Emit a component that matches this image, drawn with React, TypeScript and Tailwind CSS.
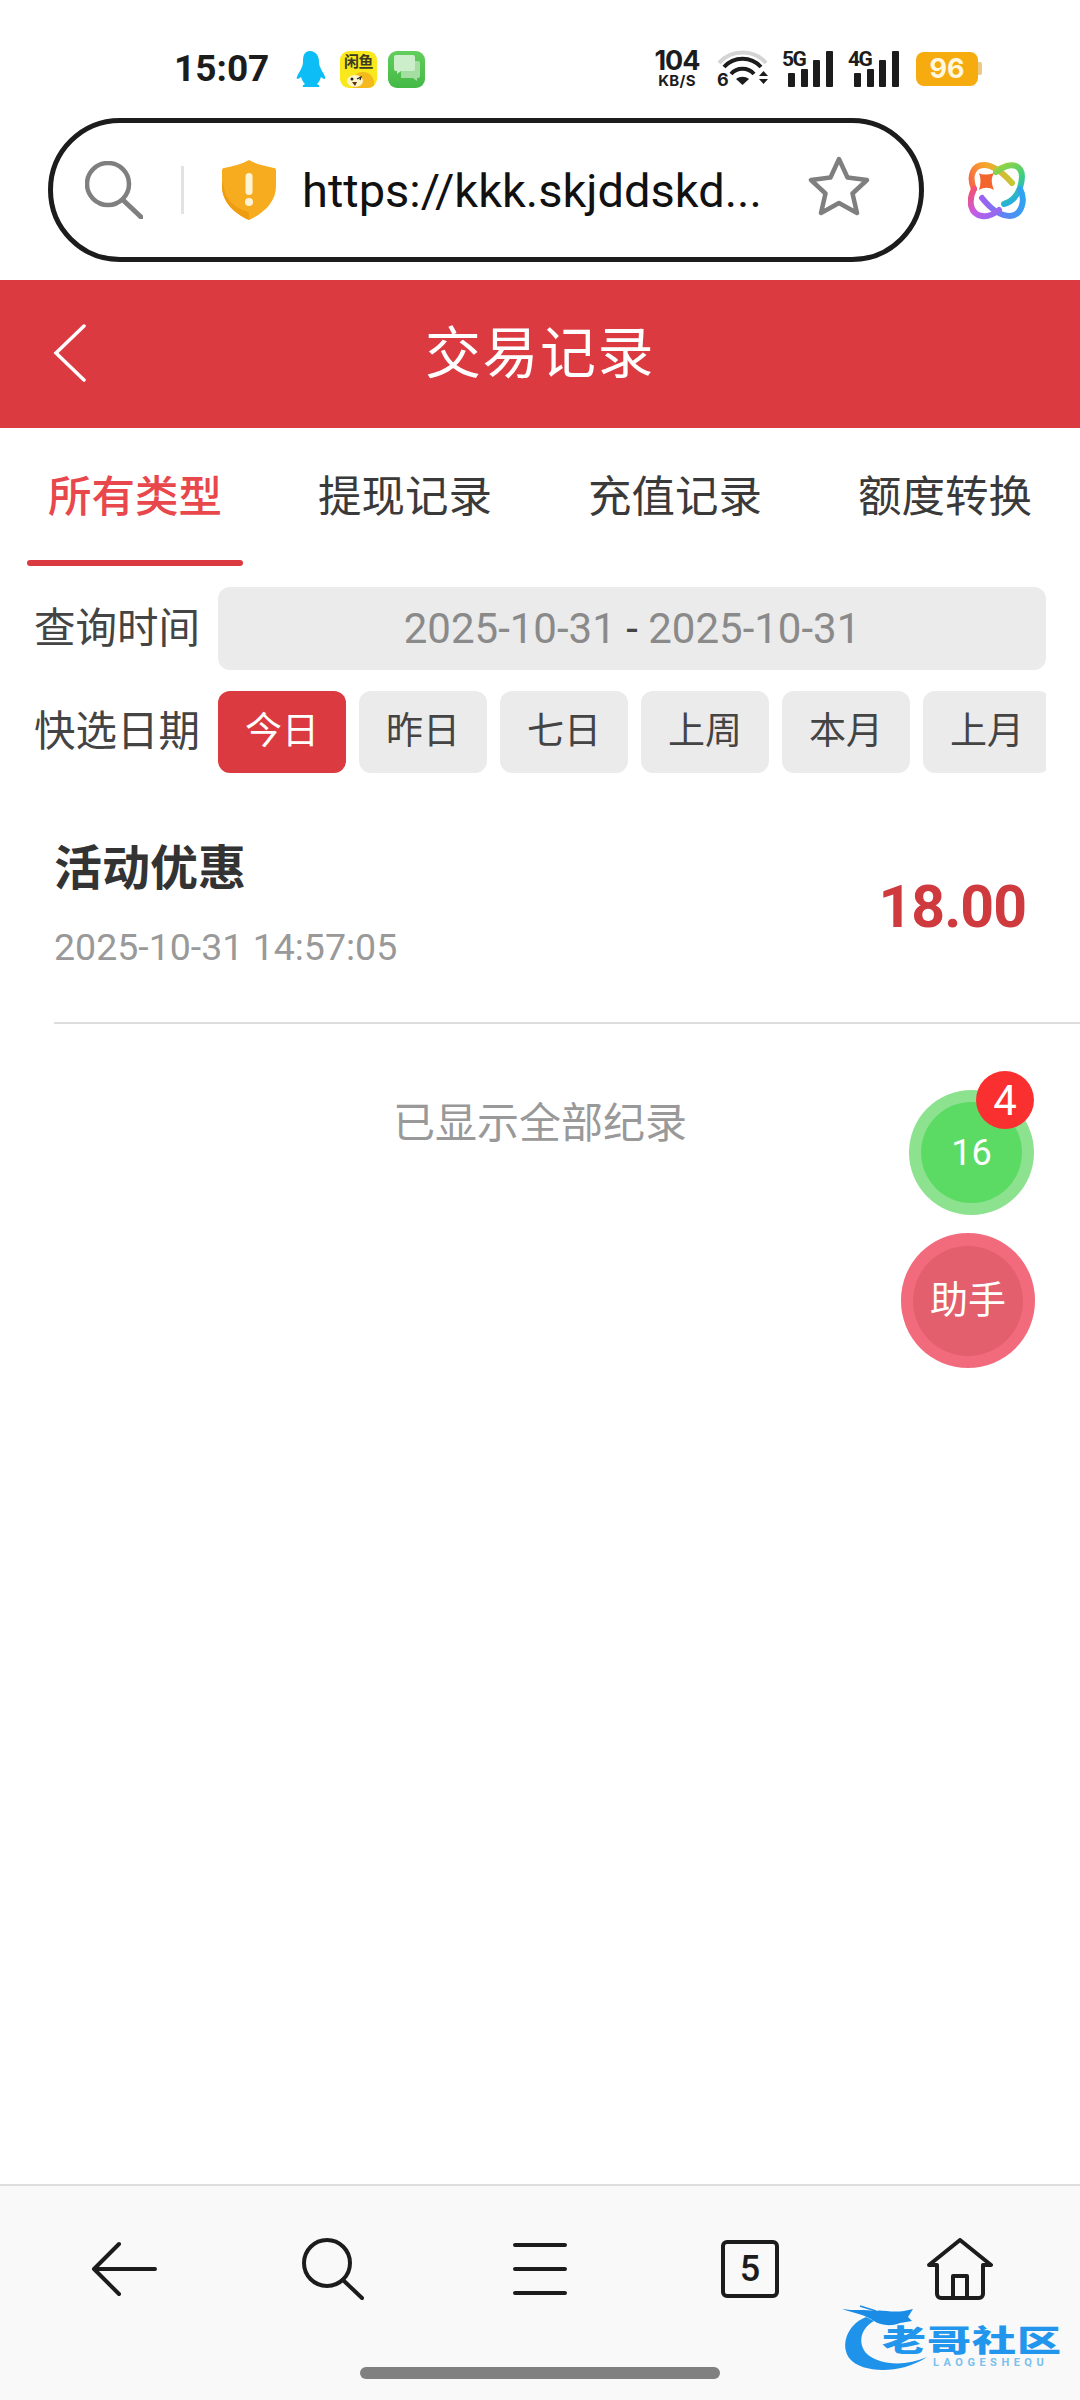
const TABS = ['所有类型', '提现记录', '充值记录', '额度转换'];
const QUICK = ['今日', '昨日', '七日', '上周', '本月', '上月'];
const CJK = "font-['Roboto','Noto_Sans_CJK_SC',sans-serif]";

function Signal({ label }: { label: string }) {
    return (
        <div className="relative w-[51px] h-[38px]">
            <span className="absolute left-0 -top-[3px] text-[21px] leading-[24px] font-bold text-[#1c1c1c] tracking-[-1.5px] font-['Roboto',sans-serif]">{label}</span>
            <svg className="absolute left-0 top-0" width="51" height="38" viewBox="0 0 51 38" fill="#1c1c1c">
                <rect x="6" y="23" width="7" height="14" rx="1" />
                <rect x="19" y="19" width="7" height="18" rx="1" />
                <rect x="31" y="10" width="7" height="27" rx="1" />
                <rect x="44" y="1" width="7" height="36" rx="1" />
            </svg>
        </div>
    );
}

function StatusBar() {
    return (
        <div className="h-[118px] pt-[50px] pl-[174px] pr-[98px] flex items-start">
            <div className="h-[38px] flex items-center">
                <span className="w-[93px] text-[37px] leading-[38px] font-bold text-[#1c1c1c] whitespace-nowrap">15:07</span>
                <svg className="ml-[27px]" width="32" height="36" viewBox="0 0 32 36">
                    <path d="M16 0c6 0 9 5 9 11 0 3 1 5 3 9 2 3 4 7 3 8-1 0-3-1-4-2-1 3-2 5-4 7 2 1 3 2 2 3H9c-1-1 0-2 2-3-2-2-3-4-4-7-1 1-3 2-4 2-1-1 1-5 3-8 2-4 3-6 3-9C9 5 10 0 16 0z" fill="#0dbdf6" />
                </svg>
                <div className="ml-[14px] relative w-[37px] h-[37px] rounded-[9px] bg-[#f9e81b] overflow-hidden flex justify-center">
                    <span className="text-[15px] leading-[16px] mt-[3px] font-bold text-[#3d3a22] tracking-[-0.5px] whitespace-nowrap">闲鱼</span>
                    <svg className="absolute left-0 bottom-0" width="37" height="18" viewBox="0 0 37 18">
                        <circle cx="23" cy="13" r="11" fill="#f4b91c" />
                        <ellipse cx="15" cy="11" rx="8" ry="6" fill="#fff6c8" />
                        <circle cx="12" cy="9" r="1.500" fill="#222" />
                        <path d="M17 9l4-2-1 3" fill="none" stroke="#222" strokeWidth="1.200" />
                        <path d="M12 12l5 0-2 4z" fill="#5b3312" />
                    </svg>
                </div>
                <div className="ml-[11px] w-[37px] h-[37px] rounded-[9px] bg-linear-to-b from-[#62ce5c] to-[#43b945] flex items-center justify-center">
                    <svg width="37" height="37" viewBox="0 0 37 37">
                        <path d="M13 10h17a2 2 0 0 1 2 2v13a2 2 0 0 1-2 2h-1v3l-4-3H13z" fill="#a4dea2" />
                        <path d="M8 4h17a2 2 0 0 1 2 2v12a2 2 0 0 1-2 2H13l-4 3v-3H8a2 2 0 0 1-2-2V6a2 2 0 0 1 2-2z" fill="#cdeecb" />
                    </svg>
                </div>
            </div>
            <div className="ml-auto h-[38px] flex items-center font-['Inter',sans-serif]">
                <div className="w-[46px] flex flex-col items-center text-[#1c1c1c] font-bold">
                    <span className="text-[27px] leading-[22px] tracking-[-1px]">104</span>
                    <span className="mt-[1px] text-[15px] leading-[15px] tracking-[0.3px]">KB/S</span>
                </div>
                <div className="ml-[17px] relative w-[52px] h-[38px]">
                    <svg className="absolute left-0 top-0" width="52" height="38" viewBox="0 0 52 38" fill="none">
                        <path d="M2 13C14 -1 37 -1 49 13" stroke="#d4d4d4" strokeWidth="4" />
                        <path d="M7 17C17 6 34 6 44 17" stroke="#1c1c1c" strokeWidth="4" />
                        <path d="M14 24C20 17 31 17 37 24" stroke="#1c1c1c" strokeWidth="4" />
                        <path d="M19 29c4-3 9-3 13 0l-6.500 6z" fill="#1c1c1c" />
                        <path d="M42 26h9l-4.500-5zM42 29h9l-4.500 5z" fill="#1c1c1c" />
                    </svg>
                    <span className="absolute left-0 top-[21px] text-[18px] leading-[18px] font-bold text-[#1c1c1c]">6</span>
                </div>
                <div className="ml-[13px]"><Signal label="5G" /></div>
                <div className="ml-[15px]"><Signal label="4G" /></div>
                <div className="ml-[17px] relative w-[62px] h-[34px] mr-[4px] rounded-[8px] bg-[#f6ab0e] flex items-center justify-center text-[#fff8e0] text-[27px] font-bold">
                    96
                    <span className="absolute -right-[4px] top-[10px] w-[4px] h-[13px] rounded-r-[2px] bg-[#ecca85]" />
                </div>
            </div>
        </div>
    );
}

function AppLogo() {
    return (
        <svg className="mt-[44px] ml-[44px]" width="58" height="58" viewBox="0 0 58 58" fill="none" strokeWidth="6" strokeLinecap="round">
            <defs>
                <linearGradient id="lg1" x1="0" y1="30" x2="45" y2="10" gradientUnits="userSpaceOnUse">
                    <stop offset="0" stopColor="#f6574f" />
                    <stop offset="0.5" stopColor="#f9a12a" />
                    <stop offset="1" stopColor="#b9cf3a" />
                </linearGradient>
                <linearGradient id="lg2" x1="28" y1="4" x2="50" y2="40" gradientUnits="userSpaceOnUse">
                    <stop offset="0" stopColor="#9fd33c" />
                    <stop offset="0.5" stopColor="#3fcf7e" />
                    <stop offset="1" stopColor="#22a9f0" />
                </linearGradient>
                <linearGradient id="lg3" x1="56" y1="30" x2="14" y2="42" gradientUnits="userSpaceOnUse">
                    <stop offset="0" stopColor="#2aa6f2" />
                    <stop offset="0.6" stopColor="#5f84f4" />
                    <stop offset="1" stopColor="#a45ef0" />
                </linearGradient>
                <linearGradient id="lg4" x1="5" y1="26" x2="30" y2="54" gradientUnits="userSpaceOnUse">
                    <stop offset="0" stopColor="#f5506f" />
                    <stop offset="0.5" stopColor="#c65be6" />
                    <stop offset="1" stopColor="#8b6cf2" />
                </linearGradient>
            </defs>
            <path d="M6 27C0 13 6 3 16 3c10 0 20 9 28 18" stroke="url(#lg1)" />
            <path d="M28 10C35 4 43 2 48 4c7 3 7 12 4 22-3 8-9 14-16 16" stroke="url(#lg2)" />
            <path d="M52 27c6 11 2 26-10 27-10 0-20-8-28-18" stroke="url(#lg3)" />
            <path d="M6 27C0 39 2 52 14 54c6 1 12-2 17-6" stroke="url(#lg4)" />
            <path d="M11 11c3 2 8 2 15 0-3 5-3 10 0 17-5-3-10-3-15 0 2-6 2-12 0-17z" fill="#f4642f" />
        </svg>
    );
}

function AddressBar() {
    return (
        <div className="h-[162px] flex items-start">
            <div className="ml-[48px] w-[876px] h-[144px] rounded-[72px] border-[5px] border-[#1c1c1c] flex items-center bg-white">
                <svg className="ml-[32px]" width="58" height="58" viewBox="0 0 58 58" fill="none" stroke="#7f7f7f" strokeWidth="4.500" strokeLinecap="round">
                    <circle cx="23" cy="23" r="21" />
                    <path d="M38 39l18 17" strokeWidth="5" />
                </svg>
                <div className="ml-[38px] w-[3px] h-[48px] bg-[#e2e2e2]" />
                <svg className="ml-[38px]" width="54" height="60" viewBox="0 0 54 60">
                    <path d="M27 0c7 4 15 6 25 8 2 0 2 2 2 4v14c0 16-12 27-27 34C12 53 0 42 0 26V12c0-2 0-4 2-4 10-2 18-4 25-8z" fill="#f6ac1e" />
                    <path d="M0 26c0-2 0-3 1-4 1 16 10 26 26 30v8C12 53 0 42 0 26z" fill="#ee9c10" />
                    <rect x="23.500" y="13" width="7" height="22" rx="3.500" fill="#fff3d6" />
                    <circle cx="27" cy="42" r="4" fill="#fff3d6" />
                </svg>
                <span className="ml-[26px] w-[473px] pt-[2px] text-[47px] text-[#111] font-['Roboto',sans-serif] truncate">https://kkk.skjddskd...</span>
                <svg className="ml-[33px] -mt-[8px]" width="62" height="60" viewBox="0 0 62 60" fill="none" stroke="#7f7f7f" strokeWidth="4.500" strokeLinejoin="round">
                    <path d="M31 3l8.500 18.500L59 24 44.500 37.500 49 57 31 47 13 57l4.500-19.500L3 24l19.500-2.500z" />
                </svg>
            </div>
            <AppLogo />
        </div>
    );
}

export default function App() {
    return (
        <div className={`w-[1080px] h-[2400px] bg-white flex flex-col overflow-hidden relative ${CJK}`}>
            <StatusBar />
            <AddressBar />
            <header className="h-[148px] bg-[#db3a40] relative flex items-center justify-center">
                <svg className="absolute left-[53px] top-[44px]" width="34" height="58" viewBox="0 0 34 58" fill="none" stroke="#fff" strokeWidth="3.500" strokeLinecap="round">
                    <path d="M31 2L3 29l28 27" />
                </svg>
                <h1 className="text-[56px] text-white font-normal tracking-[1.5px]">交易记录</h1>
            </header>
            <nav className="h-[138px] flex relative">
                {TABS.map((tab, i) => (
                    <div key={tab} className="w-[270px] flex justify-center pt-[40px] relative">
                        <span className={`text-[43.5px] leading-[60px] ${i === 0 ? 'text-[#e8474c] font-medium' : 'text-[#3a3a3a]'}`}>{tab}</span>
                        {i === 0 && <span className="absolute left-[27px] bottom-0 w-[216px] h-[6px] rounded-full bg-[#db3a40]" />}
                    </div>
                ))}
            </nav>
            <div className="mt-[21px] flex items-center px-[34px]">
                <span className="w-[184px] text-[41.5px] text-[#444] leading-[56px] shrink-0 whitespace-nowrap">查询时间</span>
                <div className="flex-1 h-[83px] rounded-[12px] bg-[#ebebeb] flex items-center justify-center text-[42px] text-[#8a8a8a] font-['Roboto',sans-serif] whitespace-pre">
                    2025-10-31 <span className="text-[#444]">-</span> 2025-10-31
                </div>
            </div>
            <div className="mt-[21px] flex items-center px-[34px]">
                <span className="w-[184px] text-[41.5px] text-[#444] leading-[56px] shrink-0 whitespace-nowrap">快选日期</span>
                <div className="flex-1 flex gap-[13px] overflow-hidden">
                    {QUICK.map((q, i) => (
                        <div key={q} className={`w-[128px] h-[82px] shrink-0 rounded-[12px] flex items-center justify-center text-[37px] ${i === 0 ? 'bg-[#db3a40] text-white' : 'bg-[#ebebeb] text-[#444]'}`}>{q}</div>
                    ))}
                </div>
            </div>
            <section className="mt-[31px] ml-[54px] h-[220px] border-b-2 border-[#dddddd] flex justify-between items-center pr-[54px]">
                <div className="mb-[20px]">
                    <div className="text-[48px] font-bold text-[#333] leading-[64px]">活动优惠</div>
                    <div className="mt-[24px] text-[37.5px] text-[#999] leading-[44px] font-['Roboto',sans-serif]">2025-10-31 14:57:05</div>
                </div>
                <div className="mb-[12px] text-[59px] font-bold text-[#cf3a3f] tracking-[-1px] font-['Roboto',sans-serif]">18.00</div>
            </section>
            <div className="mt-[70px] text-center text-[42px] text-[#999] leading-[60px]">已显示全部纪录</div>

            <div className="absolute left-[909px] top-[1090px] w-[125px] h-[125px] rounded-full bg-[#8ce28f] flex items-center justify-center">
                <div className="w-[101px] h-[101px] rounded-full bg-[#5cdb64] flex items-center justify-center text-white text-[36px]">16</div>
                <div className="absolute right-0 -top-[19px] w-[58px] h-[58px] rounded-full bg-[#f9302f] flex items-center justify-center text-white text-[42px]">4</div>
            </div>
            <div className="absolute left-[901px] top-[1233px] w-[134px] h-[135px] rounded-full bg-[#f26b7c] flex items-center justify-center">
                <div className="w-[110px] h-[110px] rounded-full bg-[#e35f6d] flex items-center justify-center text-white text-[38px]">助手</div>
            </div>

            <footer className="absolute left-0 right-0 bottom-0 h-[216px] bg-[#f9f9f9] border-t-2 border-[#dedede]">
                <div className="h-[166px] px-[15px] grid grid-cols-5 items-center justify-items-center">
                    <svg className="ml-[8px]" width="66" height="56" viewBox="0 0 66 56" fill="none" stroke="#1c1c1c" strokeWidth="4" strokeLinecap="round" strokeLinejoin="round">
                        <path d="M28 3L3 28l25 25M3 28h61" />
                    </svg>
                    <svg className="ml-[6px]" width="62" height="62" viewBox="0 0 62 62" fill="none" stroke="#1c1c1c" strokeWidth="4" strokeLinecap="round">
                        <circle cx="25" cy="25" r="23" />
                        <path d="M41 42l19 18" />
                    </svg>
                    <svg width="54" height="52" viewBox="0 0 54 52" fill="none" stroke="#1c1c1c" strokeWidth="4" strokeLinecap="round">
                        <path d="M2 2h50M2 26h50M2 50h50" />
                    </svg>
                    <div className="w-[58px] h-[58px] rounded-[6px] border-[4px] border-[#1c1c1c] flex items-center justify-center text-[36px] font-medium text-[#1c1c1c] font-['Roboto',sans-serif]">5</div>
                    <svg width="66" height="62" viewBox="0 0 66 62" fill="none" stroke="#1c1c1c" strokeWidth="4" strokeLinejoin="round">
                        <path d="M2 27L33 2l31 25h-8v29a4 4 0 0 1-4 4H14a4 4 0 0 1-4-4V27z" />
                        <path d="M26 60V38h14v22" />
                    </svg>
                </div>
                <div className="mt-[15px] mx-auto w-[360px] h-[12px] rounded-full bg-[#808080]" />
            </footer>

            {/* site watermark */}
            <div className="absolute left-[830px] top-[2295px] w-[250px] h-[90px]">
                <svg className="absolute left-0 top-0" width="100" height="90" viewBox="0 0 100 90">
                    <path d="M36 22C16 30 10 52 20 64c12 14 50 16 77 -2C75 72 48 70 36 58 28 48 30 34 44 26z" fill="#1f93ea" />
                    <path d="M12 14c12 2 24 0 32 2 8-2 16 2 30 0l9-2-5 8 4 4-12 2c-10 4-20 2-26-2-8-6-20-8-32-12z" fill="#1a8ce6" />
                    <path d="M30 11l16 5" stroke="#1a8ce6" strokeWidth="1.500" />
                </svg>
                <span className="absolute left-[52px] top-[32px] origin-top-left scale-y-[0.68] text-[44px] leading-[42px] font-black text-[#2196ec] tracking-[1px] whitespace-nowrap">老哥社区</span>
                <span className="absolute left-[103px] top-[62px] text-[11px] leading-[12px] font-bold text-[#7cc0ee] tracking-[4.5px] whitespace-nowrap">LAOGESHEQU</span>
            </div>
        </div>
    );
}
